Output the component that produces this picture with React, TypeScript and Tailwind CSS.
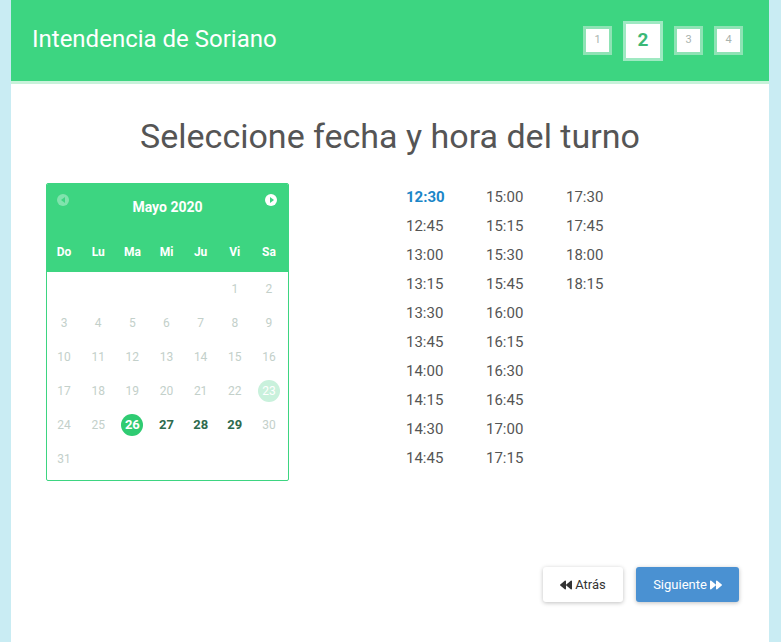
import { FaBackward, FaForward } from "react-icons/fa";

const weekDays = ["Do", "Lu", "Ma", "Mi", "Ju", "Vi", "Sa"];

const times = [
  ["12:30", "12:45", "13:00", "13:15", "13:30", "13:45", "14:00", "14:15", "14:30", "14:45"],
  ["15:00", "15:15", "15:30", "15:45", "16:00", "16:15", "16:30", "16:45", "17:00", "17:15"],
  ["17:30", "17:45", "18:00", "18:15"],
];

const available = [27, 28, 29];

const StepBox = ({ n, active }: { n: number; active?: boolean }) => {
  if (active) {
    return (
      <div className="w-[40px] h-[40px] bg-white border-[3px] border-[#9fe9c2] flex items-center justify-center text-[19px] font-bold text-[#3bb877]">
        {n}
      </div>
    );
  }
  return (
    <div className="w-[29px] h-[29px] bg-white border-[3px] border-[#8fe3b5] flex items-center justify-center text-[11px] text-[#a9b3ae]">
      {n}
    </div>
  );
};

const Calendar = () => {
  const cells: (number | null)[] = [null, null, null, null, null];
  for (let d = 1; d <= 31; d++) cells.push(d);

  return (
    <div className="w-[243px] border border-[#3dd581] rounded-[2px] bg-white overflow-hidden">
      <div className="bg-[#3dd581] relative">
        <span className="absolute left-[10px] top-[10px] w-[12px] h-[12px] rounded-full bg-white/35 flex items-center justify-center">
          <span className="w-0 h-0 border-y-[3px] border-y-transparent border-r-[4px] border-r-[#3dd581] -ml-[1px]" />
        </span>
        <span className="absolute right-[11px] top-[10px] w-[12px] h-[12px] rounded-full bg-white flex items-center justify-center">
          <span className="w-0 h-0 border-y-[3px] border-y-transparent border-l-[4px] border-l-[#3dd581] ml-[1px]" />
        </span>
        <div className="h-[47px] flex items-center justify-center text-white font-bold text-[14px]">
          Mayo 2020
        </div>
        <div className="grid grid-cols-7 h-[41px] items-center pr-[2px]">
          {weekDays.map((d) => (
            <div key={d} className="text-center text-white font-bold text-[12px]">
              {d}
            </div>
          ))}
        </div>
      </div>
      <div className="grid grid-cols-7 pb-[4px] pr-[2px]">
        {cells.map((d, i) => (
          <div key={i} className="h-[34px] flex items-center justify-center">
            {d === 26 ? (
              <span className="w-[22px] h-[22px] rounded-full bg-[#2fcb72] text-white font-bold text-[13px] flex items-center justify-center">
                26
              </span>
            ) : d === 23 ? (
              <span className="w-[22px] h-[22px] rounded-full bg-[#c9f1dc] text-white text-[12px] flex items-center justify-center">
                23
              </span>
            ) : d && available.includes(d) ? (
              <span className="text-[13px] font-bold text-[#2e6a4e]">{d}</span>
            ) : d ? (
              <span className="text-[12px] text-[#c3d0ca]">{d}</span>
            ) : null}
          </div>
        ))}
      </div>
    </div>
  );
};

const App = () => {
  return (
    <div
      className="min-h-[642px] bg-[#c9ecf3] px-[11px] pr-[12px]"
      style={{ fontFamily: "Roboto, 'Noto Sans', sans-serif" }}
    >
      <div className="bg-white min-h-[642px] flex flex-col">
        <header className="h-[81px] bg-[#3dd581] flex items-center justify-between pl-[21px] pr-[26px]">
          <h1 className="text-white text-[24px] font-normal -mt-[4px]">Intendencia de Soriano</h1>
          <div className="flex items-center gap-[11px]">
            <StepBox n={1} />
            <StepBox n={2} active />
            <StepBox n={3} />
            <StepBox n={4} />
          </div>
        </header>
        <div className="h-[3px] bg-[#c8f2da]" />

        <h2 className="text-center text-[34px] leading-[40px] text-[#555] mt-[32px]">
          Seleccione fecha y hora del turno
        </h2>

        <div className="flex mt-[27px] pl-[35px]">
          <Calendar />
          <div className="flex ml-[117px]">
            {times.map((col, ci) => (
              <div key={ci} className="flex flex-col w-[80px]">
                {col.map((t) => (
                  <div
                    key={t}
                    className={
                      t === "12:30"
                        ? "h-[29px] leading-[29px] text-[15px] font-bold text-[#1b86c8]"
                        : "h-[29px] leading-[29px] text-[15px] text-[#555]"
                    }
                  >
                    {t}
                  </div>
                ))}
              </div>
            ))}
          </div>
        </div>

        <div className="flex justify-end gap-[13px] pr-[30px] mt-[86px]">
          <button className="w-[80px] h-[35px] bg-white rounded-[3px] shadow-[0_1px_4px_rgba(0,0,0,0.25)] flex items-center justify-center gap-[3px] text-[13px] text-[#333]">
            <FaBackward size={12} />
            Atrás
          </button>
          <button className="w-[103px] h-[35px] bg-[#4a91d2] rounded-[3px] shadow-[0_1px_4px_rgba(0,0,0,0.25)] flex items-center justify-center gap-[3px] text-[13px] text-white">
            Siguiente
            <FaForward size={12} />
          </button>
        </div>
      </div>
    </div>
  );
};

export default App;
